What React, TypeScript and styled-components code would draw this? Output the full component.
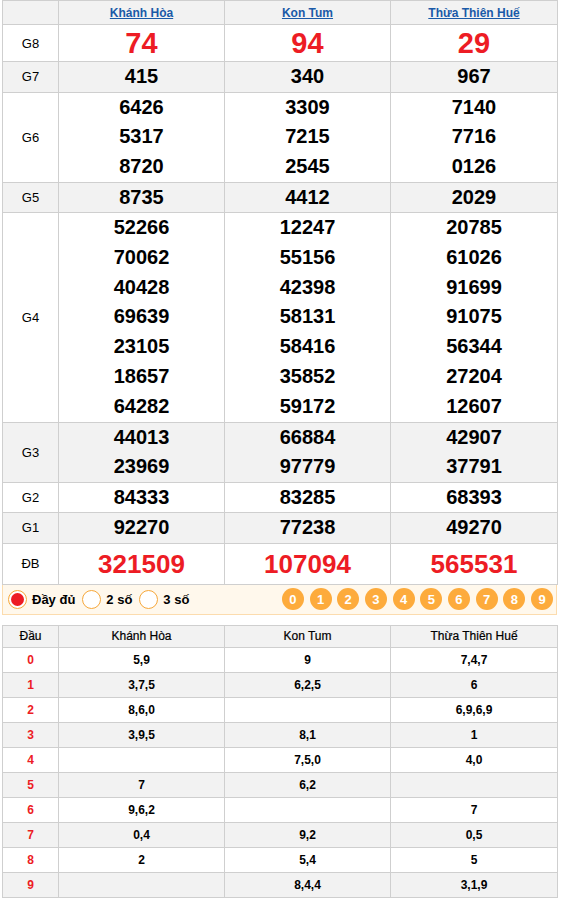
import React from "react";
import styled, { createGlobalStyle } from "styled-components";

const Global = createGlobalStyle`
  html, body { margin: 0; padding: 0; background: #fff; }
  body { font-family: "Liberation Sans", Arial, sans-serif; color: #000; }
`;

const Page = styled.div`
  width: 555px;
  padding: 0 0 0 2px;
`;

const Table = styled.table`
  width: 555px;
  border-collapse: collapse;
  table-layout: fixed;
  font-family: "Liberation Sans", Arial, sans-serif;
`;

const Row = styled.tr<{ $gray?: boolean }>`
  background: ${(p) => (p.$gray ? "#f2f2f2" : "#fff")};
`;

const HeadCell = styled.th<{ $h: number }>`
  border: 1px solid #cfcfcf;
  height: ${(p) => p.$h}px;
  padding: 0;
  font-weight: bold;
  font-size: 12px;
  text-align: center;
  vertical-align: middle;
`;

const ProvinceLink = styled.a`
  color: #1a5aa8;
  text-decoration: underline;
  font-weight: bold;
  font-size: 12px;
`;

const LabelCell = styled.td`
  border: 1px solid #cfcfcf;
  padding: 0;
  text-align: center;
  vertical-align: middle;
  font-size: 13px;
`;

const NumCell = styled.td`
  border: 1px solid #cfcfcf;
  padding: 0;
  text-align: center;
  vertical-align: middle;
`;

const Num = styled.div<{ $size: number; $red?: boolean; $h: number }>`
  font-size: ${(p) => p.$size}px;
  font-weight: bold;
  line-height: ${(p) => p.$h}px;
  height: ${(p) => p.$h}px;
  color: ${(p) => (p.$red ? "#ed1c24" : "#000")};
`;

const Bar = styled.div`
  box-sizing: border-box;
  width: 555px;
  height: 30px;
  background: #fff8ec;
  border: 1px solid #fcdcae;
  border-top: none;
  display: flex;
  align-items: center;
  padding: 0 0 0 5px;
`;

const RadioGroup = styled.div`
  display: flex;
  align-items: center;
  gap: 5px;
`;

const RadioItem = styled.label`
  display: flex;
  align-items: center;
  gap: 5px;
  font-size: 13px;
  font-weight: bold;
  margin-right: 2px;
`;

const RadioCircle = styled.span<{ $on?: boolean }>`
  box-sizing: border-box;
  width: 19px;
  height: 19px;
  border-radius: 50%;
  border: 1px solid #f6a73a;
  background: #fff;
  display: flex;
  align-items: center;
  justify-content: center;
  &::after {
    content: "";
    display: ${(p) => (p.$on ? "block" : "none")};
    width: 13px;
    height: 13px;
    border-radius: 50%;
    background: #ed1c24;
  }
`;

const Digits = styled.div`
  margin-left: auto;
  margin-right: 3px;
  display: flex;
  gap: 5.7px;
`;

const Digit = styled.span`
  width: 22px;
  height: 22px;
  border-radius: 50%;
  background: #fdab3c;
  color: #fff;
  font-size: 13px;
  font-weight: bold;
  display: flex;
  align-items: center;
  justify-content: center;
`;

const Gap = styled.div`
  height: 10px;
`;

const SmallHead = styled.th`
  border: 1px solid #cfcfcf;
  height: 21px;
  padding: 0;
  font-size: 12px;
  font-weight: normal;
  text-align: center;
  vertical-align: middle;
  -webkit-text-stroke: 0.2px #000;
`;

const SmallCell = styled.td<{ $red?: boolean }>`
  border: 1px solid #cfcfcf;
  height: 24px;
  padding: 0;
  font-size: 12px;
  font-weight: bold;
  text-align: center;
  vertical-align: middle;
  color: ${(p) => (p.$red ? "#ed1c24" : "#000")};
`;

type Prize = { label: string; size: number; h: number; red?: boolean; cols: string[][] };

const prizes: Prize[] = [
  { label: "G8", size: 29, h: 36, red: true, cols: [["74"], ["94"], ["29"]] },
  { label: "G7", size: 20, h: 29.7, cols: [["415"], ["340"], ["967"]] },
  {
    label: "G6",
    size: 20,
    h: 29.7,
    cols: [
      ["6426", "5317", "8720"],
      ["3309", "7215", "2545"],
      ["7140", "7716", "0126"],
    ],
  },
  { label: "G5", size: 20, h: 29.3, cols: [["8735"], ["4412"], ["2029"]] },
  {
    label: "G4",
    size: 20,
    h: 29.8,
    cols: [
      ["52266", "70062", "40428", "69639", "23105", "18657", "64282"],
      ["12247", "55156", "42398", "58131", "58416", "35852", "59172"],
      ["20785", "61026", "91699", "91075", "56344", "27204", "12607"],
    ],
  },
  {
    label: "G3",
    size: 20,
    h: 29.6,
    cols: [
      ["44013", "23969"],
      ["66884", "97779"],
      ["42907", "37791"],
    ],
  },
  { label: "G2", size: 20, h: 29.3, cols: [["84333"], ["83285"], ["68393"]] },
  { label: "G1", size: 20, h: 29.6, cols: [["92270"], ["77238"], ["49270"]] },
  { label: "ĐB", size: 26, h: 40, red: true, cols: [["321509"], ["107094"], ["565531"]] },
];

const provinces = ["Khánh Hòa", "Kon Tum", "Thừa Thiên Huế"];

const loto: string[][] = [
  ["5,9", "9", "7,4,7"],
  ["3,7,5", "6,2,5", "6"],
  ["8,6,0", "", "6,9,6,9"],
  ["3,9,5", "8,1", "1"],
  ["", "7,5,0", "4,0"],
  ["7", "6,2", ""],
  ["9,6,2", "", "7"],
  ["0,4", "9,2", "0,5"],
  ["2", "5,4", "5"],
  ["", "8,4,4", "3,1,9"],
];

const Cols = () => (
  <colgroup>
    <col style={{ width: 56 }} />
    <col style={{ width: 166 }} />
    <col style={{ width: 166 }} />
    <col style={{ width: 167 }} />
  </colgroup>
);

export default function App() {
  return (
    <Page>
      <Global />
      <Table>
        <Cols />
        <thead>
          <Row $gray>
            <HeadCell $h={23}></HeadCell>
            {provinces.map((p) => (
              <HeadCell $h={23} key={p}>
                <ProvinceLink href="#">{p}</ProvinceLink>
              </HeadCell>
            ))}
          </Row>
        </thead>
        <tbody>
          {prizes.map((pr, i) => (
            <Row key={pr.label} $gray={i % 2 === 1}>
              <LabelCell>{pr.label}</LabelCell>
              {pr.cols.map((c, j) => (
                <NumCell key={j}>
                  {c.map((n, k) => (
                    <Num key={k} $size={pr.size} $h={pr.h} $red={pr.red}>
                      {n}
                    </Num>
                  ))}
                </NumCell>
              ))}
            </Row>
          ))}
        </tbody>
      </Table>
      <Bar>
        <RadioGroup>
          <RadioItem>
            <RadioCircle $on />
            Đầy đủ
          </RadioItem>
          <RadioItem>
            <RadioCircle />
            2 số
          </RadioItem>
          <RadioItem>
            <RadioCircle />
            3 số
          </RadioItem>
        </RadioGroup>
        <Digits>
          {Array.from({ length: 10 }, (_, i) => (
            <Digit key={i}>{i}</Digit>
          ))}
        </Digits>
      </Bar>
      <Gap />
      <Table>
        <Cols />
        <thead>
          <Row $gray>
            <SmallHead>Đầu</SmallHead>
            {provinces.map((p) => (
              <SmallHead key={p}>{p}</SmallHead>
            ))}
          </Row>
        </thead>
        <tbody>
          {loto.map((r, i) => (
            <Row key={i} $gray={i % 2 === 1}>
              <SmallCell $red>{i}</SmallCell>
              {r.map((v, j) => (
                <SmallCell key={j}>{v}</SmallCell>
              ))}
            </Row>
          ))}
        </tbody>
      </Table>
    </Page>
  );
}
